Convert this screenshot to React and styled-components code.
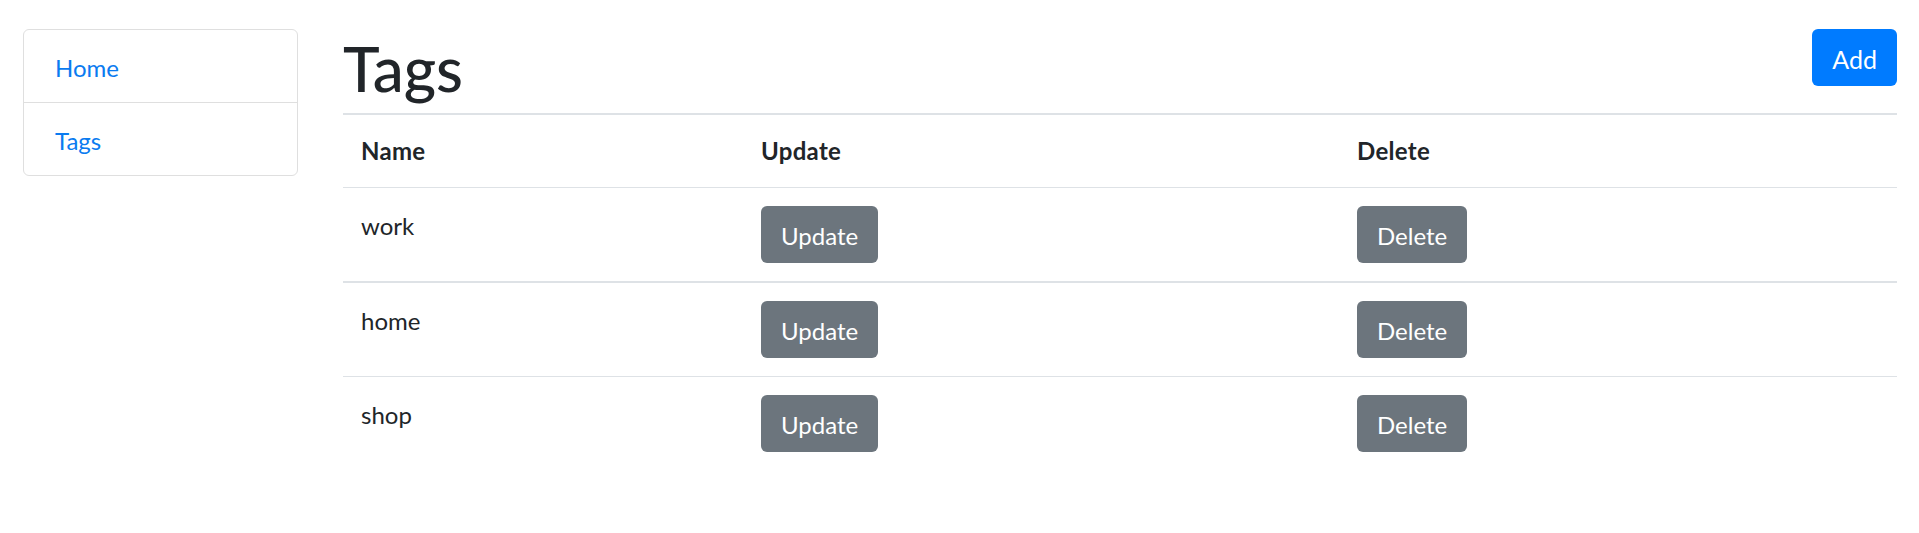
import React from 'react'
import styled, { createGlobalStyle } from 'styled-components'

const GlobalStyle = createGlobalStyle`
    body {
        margin: 0;
        background: #fff;
        color: #212529;
        font-family: Lato, "Liberation Sans", sans-serif;
        font-size: 24px;
        line-height: 36px;
    }
`

const tags = ['work', 'home', 'shop']

const App = () => {
    return (
        <>
            <GlobalStyle />
            <Page>
                <SideNav>
                    <NavItem href="#">Home</NavItem>
                    <NavItem href="#">Tags</NavItem>
                </SideNav>
                <Main>
                    <Header>
                        <Title>Tags</Title>
                        <Button variant="primary">Add</Button>
                    </Header>
                    <Table>
                        <colgroup>
                            <col style={{ width: 400 }} />
                            <col style={{ width: 596 }} />
                            <col />
                        </colgroup>
                        <thead>
                            <tr>
                                <Th>Name</Th>
                                <Th>Update</Th>
                                <Th>Delete</Th>
                            </tr>
                        </thead>
                        <tbody>
                            {tags.map((tag, i) => (
                                <tr key={tag}>
                                    <Td thick={i === 1} text>{tag}</Td>
                                    <Td thick={i === 1}><Button>Update</Button></Td>
                                    <Td thick={i === 1}><Button>Delete</Button></Td>
                                </tr>
                            ))}
                        </tbody>
                    </Table>
                </Main>
            </Page>
        </>
    )
}

export default App

const Page = styled.div`
    display: grid;
    grid-template-columns: 275px 1fr;
    column-gap: 45px;
    align-items: start;
    padding: 29px 22px 0 23px;
`

const SideNav = styled.nav`
    display: flex;
    flex-direction: column;
    border: 1px solid #dfdfdf;
    border-radius: 6px;
`

const NavItem = styled.a`
    display: block;
    padding: 20px 31px 16px;
    color: #0a7bf0;
    text-decoration: none;
    & + & {
        border-top: 1px solid #dfdfdf;
    }
`

const Main = styled.main`
    display: flex;
    flex-direction: column;
`

const Header = styled.div`
    display: flex;
    justify-content: space-between;
    align-items: flex-start;
    margin-bottom: 9px;
`

const Title = styled.h1`
    margin: 0;
    padding-top: 3px;
    font-size: 62px;
    line-height: 72px;
    font-weight: 500;
`

const Button = styled.button`
    height: 57px;
    padding: 2px 20px 0;
    border: none;
    border-radius: 6px;
    font-family: inherit;
    font-size: ${p => (p.variant === 'primary' ? 25 : 24)}px;
    color: #fff;
    background: ${p => (p.variant === 'primary' ? '#007bff' : '#6c757d')};
    cursor: pointer;
`

const Table = styled.table`
    width: 100%;
    border-collapse: collapse;
    table-layout: fixed;
`

const Th = styled.th`
    padding: 18px;
    text-align: left;
    font-weight: 700;
    letter-spacing: 0.3px;
    border-top: 2px solid #dee2e6;
    border-bottom: 1px solid #dee2e6;
`

const Td = styled.td`
    padding: ${p => (p.text ? '20px 18px 16px' : '18px')};
    vertical-align: top;
    border-top: ${p => (p.thick ? 2 : 1)}px solid #dee2e6;
`
